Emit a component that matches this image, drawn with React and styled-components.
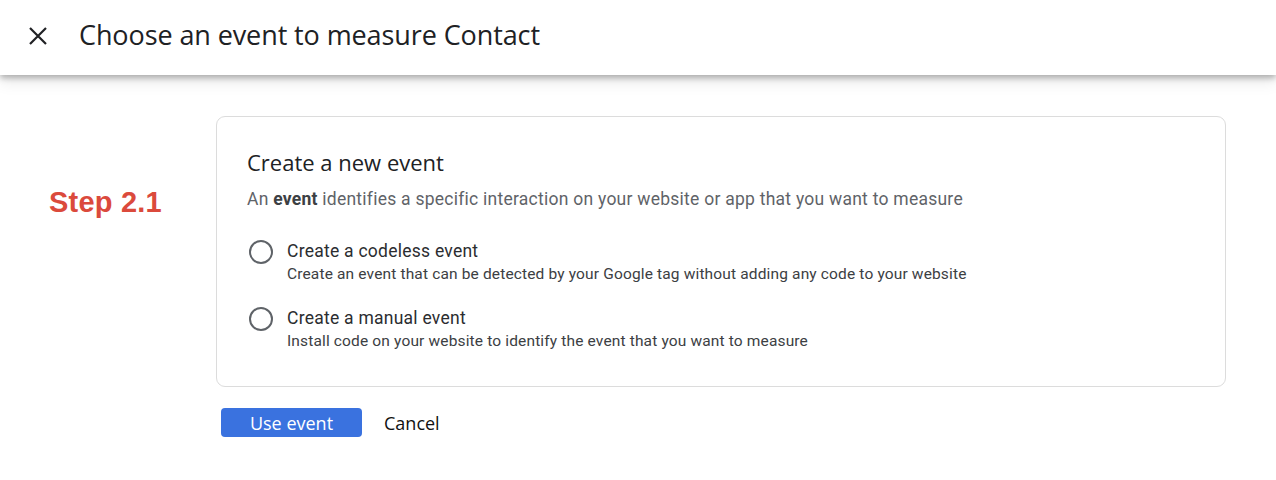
import React from "react";
import styled, { createGlobalStyle } from "styled-components";

const Global = createGlobalStyle`
  html, body { margin: 0; padding: 0; background: #ffffff; }
  body { font-family: Roboto, "Noto Sans", Arial, sans-serif; }
`;

const Page = styled.div`
  width: 1276px;
  height: 480px;
  overflow: hidden;
  background: #fff;
`;

const Header = styled.header`
  height: 75px;
  box-sizing: border-box;
  padding: 0 0 3px 28px;
  display: flex;
  align-items: center;
  gap: 31px;
  background: #fff;
  box-shadow: 0 3px 6px rgba(0, 0, 0, 0.28), 0 8px 14px rgba(0, 0, 0, 0.08);
  position: relative;
  z-index: 1;
`;

const CloseBtn = styled.button`
  border: 0;
  background: none;
  padding: 0;
  width: 20px;
  height: 20px;
  display: flex;
  align-items: center;
  justify-content: center;
  cursor: pointer;
`;

const Title = styled.h1`
  margin: 0 0 3px;
  font-family: "Open Sans", Roboto, sans-serif;
  font-weight: 400;
  font-size: 27px;
  letter-spacing: -0.1px;
  color: #202124;
`;

const Body = styled.main`
  display: flex;
  padding-top: 41px;
`;

const StepCol = styled.div`
  width: 216px;
  padding-left: 49px;
  box-sizing: border-box;
  padding-top: 70px;
`;

const StepLabel = styled.div`
  font-family: "Liberation Sans", Arial, sans-serif;
  font-weight: 700;
  font-size: 29px;
  color: #db4a3c;
  letter-spacing: 0.2px;
`;

const Main = styled.div`
  display: flex;
  flex-direction: column;
  width: 1010px;
`;

const Card = styled.section`
  border: 1px solid #dcdcdc;
  border-radius: 9px;
  padding: 31px 30px 30px 30px;
  height: 271px;
  box-sizing: border-box;
`;

const CardTitle = styled.h2`
  margin: 0;
  font-family: "Open Sans", Roboto, sans-serif;
  font-weight: 400;
  font-size: 22px;
  color: #202124;
  line-height: 28px;
`;

const CardDesc = styled.p`
  margin: 11px 0 0;
  font-size: 17.5px;
  letter-spacing: 0.25px;
  color: #5f6368;
  line-height: 24px;
  b { color: #3c4043; font-weight: 700; }
`;

const Options = styled.div`
  display: flex;
  flex-direction: column;
  gap: 21px;
  margin-top: 28px;
`;

const Option = styled.label`
  display: flex;
  align-items: flex-start;
  gap: 14px;
  cursor: pointer;
`;

const Radio = styled.span`
  width: 20px;
  height: 20px;
  border: 2px solid #5f6368;
  border-radius: 50%;
  flex: none;
  margin-left: 2px;
  margin-top: 1px;
`;

const OptText = styled.div`
  display: flex;
  flex-direction: column;
`;

const OptLabel = styled.span`
  font-size: 17.5px;
  color: #2b2d30;
  line-height: 24px;
  letter-spacing: 0.25px;
`;

const OptSub = styled.span`
  font-size: 15.5px;
  color: #3c4043;
  line-height: 22px;
  letter-spacing: 0.15px;
`;

const Actions = styled.div`
  display: flex;
  align-items: center;
  gap: 22px;
  margin-top: 21px;
  padding-left: 5px;
`;

const Primary = styled.button`
  width: 141px;
  height: 29px;
  border: 0;
  border-radius: 4px;
  background: #3a72df;
  color: #fff;
  font-family: "Open Sans", Roboto, sans-serif;
  font-size: 18px;
  font-weight: 500;
  cursor: pointer;
`;

const TextBtn = styled.button`
  border: 0;
  background: none;
  padding: 0;
  font-family: "Open Sans", Roboto, sans-serif;
  font-size: 18px;
  font-weight: 500;
  color: #111;
  cursor: pointer;
`;

const options = [
  {
    label: "Create a codeless event",
    sub: "Create an event that can be detected by your Google tag without adding any code to your website",
  },
  {
    label: "Create a manual event",
    sub: "Install code on your website to identify the event that you want to measure",
  },
];

export default function App() {
  return (
    <Page>
      <Global />
      <Header>
        <CloseBtn aria-label="Close">
          <svg width="20" height="20" viewBox="0 0 20 20">
            <path d="M2 2 L18 18 M18 2 L2 18" stroke="#202124" strokeWidth="2.2" fill="none" />
          </svg>
        </CloseBtn>
        <Title>Choose an event to measure Contact</Title>
      </Header>
      <Body>
        <StepCol>
          <StepLabel>Step 2.1</StepLabel>
        </StepCol>
        <Main>
          <Card>
            <CardTitle>Create a new event</CardTitle>
            <CardDesc>
              An <b>event</b> identifies a specific interaction on your website or app that you want to measure
            </CardDesc>
            <Options>
              {options.map((o) => (
                <Option key={o.label}>
                  <Radio />
                  <OptText>
                    <OptLabel>{o.label}</OptLabel>
                    <OptSub>{o.sub}</OptSub>
                  </OptText>
                </Option>
              ))}
            </Options>
          </Card>
          <Actions>
            <Primary>Use event</Primary>
            <TextBtn>Cancel</TextBtn>
          </Actions>
        </Main>
      </Body>
    </Page>
  );
}
